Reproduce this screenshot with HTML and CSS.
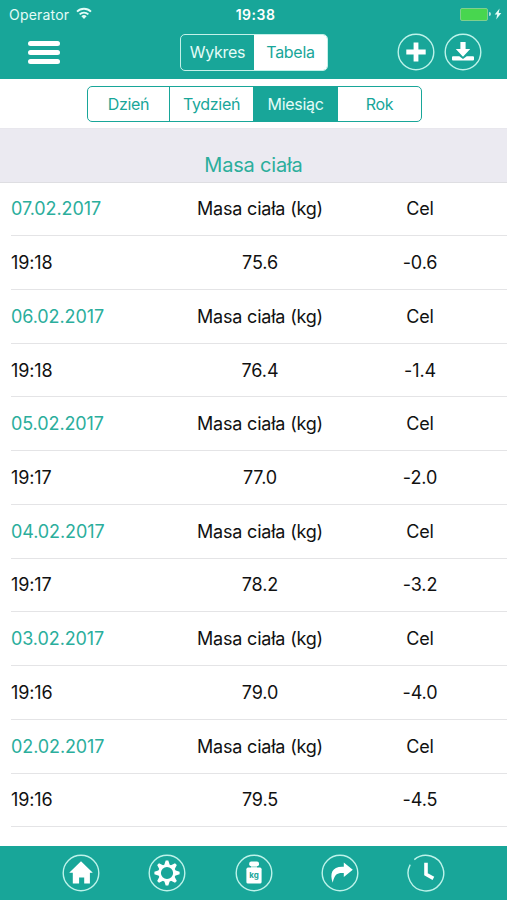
FILE: index.html
```html
<!doctype html>
<html lang="pl">
  <head>
    <meta charset="utf-8" />
    <meta name="viewport" content="width=device-width,initial-scale=1.0" />
    <title>Masa ciała</title>
    <link rel="stylesheet" href="styles.css">
  </head>
  <body>
    <header class="header">
      <div class="status-bar">
        <div class="carrier">
          <span>Operator</span>
          <svg class="wifi" width="16" height="13" viewBox="0 0 16 13">
            <g fill="none" stroke="#e4fcf7" stroke-width="1.8">
              <path d="M1 4.6a10 10 0 0 1 14 0" />
              <path d="M3.6 7.4a6.3 6.3 0 0 1 8.8 0" />
            </g>
            <path d="M5.4 9.2a3.8 3.8 0 0 1 5.2 0L8 12z" fill="#e4fcf7" />
          </svg>
        </div>
        <span class="clock">19:38</span>
        <div class="power">
          <span class="battery"></span>
          <span class="battery-tip"></span>
          <svg width="8" height="12" viewBox="0 0 8 12">
            <path d="M5.6 .6 .7 6.6h2.5L2.2 11.4 7.3 5.1H4.7z" fill="#e4fcf7" />
          </svg>
        </div>
      </div>
      <nav class="nav-bar">
        <button class="menu" aria-label="Menu"><i></i><i></i><i></i></button>
        <div class="switch">
          <button>Wykres</button>
          <button class="active">Tabela</button>
        </div>
        <div class="actions">
          <svg class="icon" viewBox="0 0 38 38">
            <circle class="ring" cx="19" cy="19" r="17.8" />
            <path d="M19 9.5v19M9.3 19h19.4" fill="none" stroke="#fff" stroke-width="4.8" />
          </svg>
          <svg class="icon" viewBox="0 0 38 38">
            <circle class="ring" cx="19" cy="19" r="17.8" />
            <path d="M16.4 9h5.2v7h4.6L19 23.7 11.8 16h4.6z" />
            <path d="M9 23.2h6.3L19 26l3.7-2.8H29a1 1 0 0 1 1 1v2.4a1 1 0 0 1-1 1H9a1 1 0 0 1-1-1v-2.4a1 1 0 0 1 1-1z" />
          </svg>
        </div>
      </nav>
    </header>

    <div class="period">
      <div class="tabs">
        <button>Dzień</button>
        <button>Tydzień</button>
        <button class="active">Miesiąc</button>
        <button>Rok</button>
      </div>
    </div>

    <main>
      <h1 class="title">Masa ciała</h1>
      <ul class="list">
        <li class="day"><span>07.02.2017</span><span>Masa ciała (kg)</span><span>Cel</span></li>
        <li><span>19:18</span><span>75.6</span><span>-0.6</span></li>
        <li class="day"><span>06.02.2017</span><span>Masa ciała (kg)</span><span>Cel</span></li>
        <li><span>19:18</span><span>76.4</span><span>-1.4</span></li>
        <li class="day"><span>05.02.2017</span><span>Masa ciała (kg)</span><span>Cel</span></li>
        <li><span>19:17</span><span>77.0</span><span>-2.0</span></li>
        <li class="day"><span>04.02.2017</span><span>Masa ciała (kg)</span><span>Cel</span></li>
        <li><span>19:17</span><span>78.2</span><span>-3.2</span></li>
        <li class="day"><span>03.02.2017</span><span>Masa ciała (kg)</span><span>Cel</span></li>
        <li><span>19:16</span><span>79.0</span><span>-4.0</span></li>
        <li class="day"><span>02.02.2017</span><span>Masa ciała (kg)</span><span>Cel</span></li>
        <li><span>19:16</span><span>79.5</span><span>-4.5</span></li>
      </ul>
    </main>

    <footer class="toolbar">
      <!-- home -->
      <svg class="icon" viewBox="0 0 38 38">
        <circle class="ring" cx="19" cy="19" r="17.8" />
        <path d="M19 7.3 30.8 18.8h-2.9v10.8h-5.7v-6.2h-5.1v6.2h-6.3V18.8H7.2z" />
      </svg>
      <!-- settings -->
      <svg class="icon" viewBox="0 0 38 38">
        <circle class="ring" cx="19" cy="19" r="17.8" />
        <circle cx="19" cy="19" r="7.4" fill="none" stroke="#fff" stroke-width="2.6" />
        <g id="teeth">
          <path id="tooth" d="M16 11.8 17.7 6.4h2.6L22 11.8z" />
          <use href="#tooth" transform="rotate(45 19 19)" />
          <use href="#tooth" transform="rotate(90 19 19)" />
          <use href="#tooth" transform="rotate(135 19 19)" />
        </g>
        <use href="#teeth" transform="rotate(180 19 19)" />
      </svg>
      <!-- weight -->
      <svg class="icon" viewBox="0 0 38 38">
        <circle class="ring" cx="19" cy="19" r="17.8" />
        <rect x="14.2" y="7.6" width="9.8" height="4.6" rx="2" />
        <path d="M16 12h6v2h-6z" fill="#b5e3dc" />
        <rect x="11.4" y="13.6" width="15.2" height="16" rx="1.6" />
        <text class="kg" x="19" y="23.6">kg</text>
      </svg>
      <!-- share -->
      <svg class="icon" viewBox="0 0 38 38">
        <circle class="ring" cx="19" cy="19" r="17.8" />
        <path d="M22.8 8.6 31.8 15.7 22.8 23v-4c-6-.4-9.4.6-11 9.8-3.6-9.6-.4-16.8 11-16z" />
      </svg>
      <!-- history -->
      <svg class="icon" viewBox="0 0 38 38">
        <path class="ring" d="M7.3 5.6A17.8 17.8 0 1 1 3.2 10.7" />
        <path d="M19 8.8v11.5l7.4 4" fill="none" stroke="#fff" stroke-width="3.6" />
      </svg>
    </footer>
  </body>
</html>
```
FILE: styles.css
```css
* {
  box-sizing: border-box;
}
body {
  margin: 0;
  height: 900px;
  display: flex;
  flex-direction: column;
  overflow: hidden;
  background: #fff;
  color: #111;
  font-family: Inter, 'Liberation Sans', sans-serif;
}
button {
  margin: 0;
  padding: 0;
  border: none;
  background: none;
  color: inherit;
  font: inherit;
  letter-spacing: inherit;
}

.header {
  height: 79px;
  background: #18a699;
  color: #e4fcf7;
}
.status-bar {
  display: grid;
  grid-template-columns: 1fr auto 1fr;
  align-items: center;
  height: 28px;
  padding: 0 5px 0 9px;
  font-size: 14px;
}
.carrier {
  display: flex;
  align-items: center;
  gap: 7px;
  letter-spacing: 0.2px;
}
.wifi {
  margin-top: -2px;
}
.clock {
  color: #fff;
  font-weight: 600;
  letter-spacing: 0.5px;
}
.power {
  display: flex;
  align-items: center;
  justify-content: flex-end;
}
.battery {
  width: 28px;
  height: 13px;
  border: 1px solid #7fd08e;
  border-radius: 2px;
  background: #48d64f;
}
.battery-tip {
  width: 2px;
  height: 4px;
  margin: 0 3px 0 1px;
  border-radius: 0 2px 2px 0;
  background: #b5e3dc;
}

.nav-bar {
  display: grid;
  grid-template-columns: 152px 148px 1fr;
  align-items: center;
  height: 48px;
  padding: 0 24px 0 28px;
}
.menu {
  width: 32px;
  display: flex;
  flex-direction: column;
  gap: 4px;
}
.menu i {
  height: 5px;
  border-radius: 2.5px;
  background: #fff;
}
.switch {
  display: flex;
  height: 37px;
  border: 1.5px solid #c4f1e9;
  border-radius: 5px;
  overflow: hidden;
  font-size: 16px;
  letter-spacing: -0.3px;
}
.switch button {
  flex: 1;
}
.switch .active {
  background: #fff;
  color: #18a699;
}
.actions {
  display: flex;
  justify-content: flex-end;
  gap: 9px;
  padding-right: 1px;
}
.icon {
  width: 38px;
  height: 38px;
  fill: #fff;
}
.ring {
  fill: none;
  stroke: #bdf3ea;
  stroke-width: 1.4;
}

.period {
  height: 49px;
  padding: 7px 85px 0 87px;
}
.tabs {
  display: grid;
  grid-template-columns: 81px 84px 84px 1fr;
  height: 36px;
  border: 1px solid #18a699;
  border-radius: 5px;
  overflow: hidden;
  color: #18a699;
  font-size: 16px;
  letter-spacing: -0.3px;
}
.tabs button + button {
  border-left: 1px solid #18a699;
}
.tabs .active {
  background: #18a699;
  color: #e4fcf7;
}

main {
  flex: 1;
}
.title {
  height: 54.6px;
  margin: 0;
  padding-top: 23px;
  border-top: 1px solid #e8e7ed;
  border-bottom: 1px solid #dedee2;
  background: #ebeaf1;
  color: #2bae9c;
  font-size: 20px;
  font-weight: 400;
  line-height: 26px;
  letter-spacing: -0.2px;
  text-align: center;
}
.list {
  margin: 0;
  padding: 0 0 0 11px;
  list-style: none;
  font-size: 18px;
  letter-spacing: -0.1px;
}
.list li {
  display: grid;
  grid-template-columns: 169px 160px 160px;
  align-items: center;
  height: 53.72px;
  border-bottom: 1px solid #e4e4e6;
  text-align: center;
}
.list span:first-child {
  text-align: left;
}
.day span:first-child {
  color: #2bae9c;
}
.day span:nth-child(2) {
  letter-spacing: -0.2px;
}

.toolbar {
  display: flex;
  align-items: center;
  justify-content: space-between;
  height: 54px;
  padding: 0 62px;
  background: #18a699;
}
.kg {
  fill: #18a699;
  font-size: 8px;
  font-weight: 700;
  text-anchor: middle;
}
```
